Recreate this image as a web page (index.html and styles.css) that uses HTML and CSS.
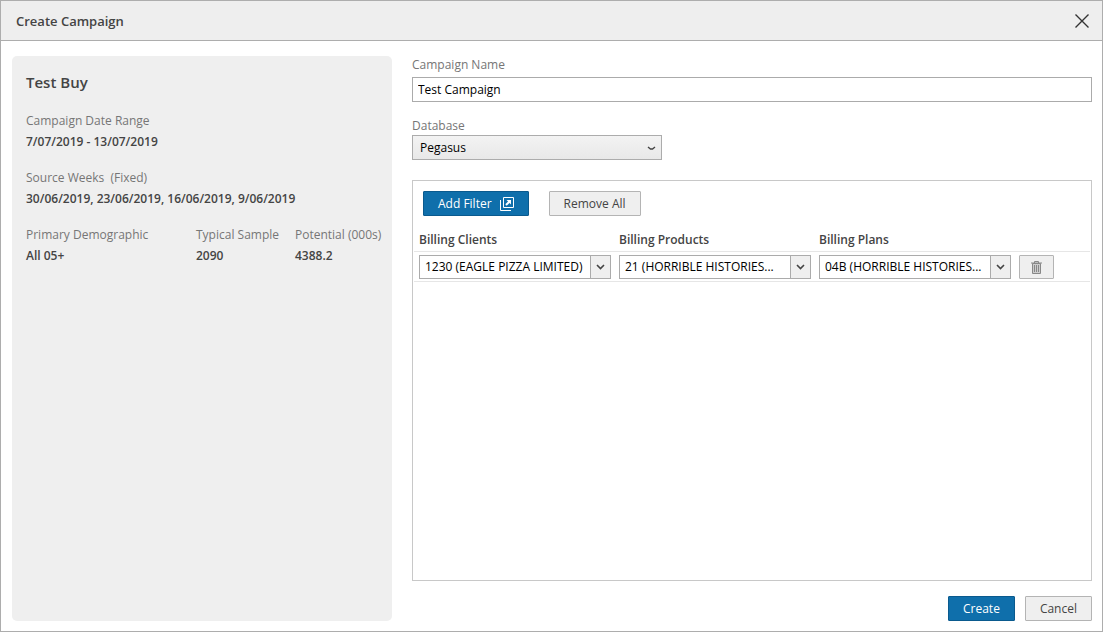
FILE: index.html
```html
<!DOCTYPE html>
<html lang="en">

<head>
    <meta charset="UTF-8">
    <meta name="viewport" content="width=device-width, initial-scale=1.0">
    <title>Create Campaign</title>

    <link rel="stylesheet" href="styles.css">
</head>

<body>
    <div class="dialog">
        <header class="dialog-header">
            <h1>Create Campaign</h1>
            <button type="button" class="close" aria-label="Close">
                <svg width="14" height="14" viewBox="0 0 14 14">
                    <path d="M0.5 0.5L13.5 13.5M13.5 0.5L0.5 13.5" />
                </svg>
            </button>
        </header>

        <div class="dialog-body">
            <!-- buy summary -->
            <aside class="summary">
                <h2>Test Buy</h2>
                <dl>
                    <div class="wide">
                        <dt>Campaign Date Range</dt>
                        <dd>7/07/2019 - 13/07/2019</dd>
                    </div>
                    <div class="wide">
                        <dt>Source Weeks &nbsp;(Fixed)</dt>
                        <dd>30/06/2019, 23/06/2019, 16/06/2019, 9/06/2019</dd>
                    </div>
                    <div>
                        <dt>Primary Demographic</dt>
                        <dd>All 05+</dd>
                    </div>
                    <div>
                        <dt>Typical Sample</dt>
                        <dd>2090</dd>
                    </div>
                    <div>
                        <dt>Potential (000s)</dt>
                        <dd>4388.2</dd>
                    </div>
                </dl>
            </aside>

            <!-- campaign form -->
            <form class="campaign">
                <div class="field">
                    <label for="name">Campaign Name</label>
                    <input type="text" id="name" value="Test Campaign">
                </div>
                <label for="database">Database</label>
                <div class="dropdown">
                    <select id="database">
                        <option>Pegasus</option>
                    </select>
                    <svg width="9" height="5" viewBox="0 0 9 5">
                        <path d="M1 1L3.5 3H5.5L8 1" />
                    </svg>
                </div>

                <section class="filters">
                    <div class="toolbar">
                        <button type="button" class="btn primary">
                            Add Filter
                            <svg width="14" height="14" viewBox="0 0 14 14">
                                <path d="M3.5 0.5H13.5V10.5H3.5ZM0.5 3V13.5H11" />
                                <path d="M6 8L10 4" stroke-width="2" />
                                <path class="solid" d="M6.5 3H11V7.5Z" />
                            </svg>
                        </button>
                        <button type="button" class="btn">Remove All</button>
                    </div>
                    <table>
                        <thead>
                            <tr>
                                <th id="clients">Billing Clients</th>
                                <th id="products">Billing Products</th>
                                <th id="plans">Billing Plans</th>
                                <td></td>
                            </tr>
                        </thead>
                        <tbody>
                            <tr>
                                <td>
                                    <div class="combo">
                                        <select aria-labelledby="clients">
                                            <option>1230 (EAGLE PIZZA LIMITED)</option>
                                        </select>
                                        <span><svg width="9" height="6" viewBox="0 0 9 6"><path d="M1 1L4.5 4.5L8 1" /></svg></span>
                                    </div>
                                </td>
                                <td>
                                    <div class="combo">
                                        <select aria-labelledby="products">
                                            <option>21 (HORRIBLE HISTORIES...</option>
                                        </select>
                                        <span><svg width="9" height="6" viewBox="0 0 9 6"><path d="M1 1L4.5 4.5L8 1" /></svg></span>
                                    </div>
                                </td>
                                <td>
                                    <div class="combo">
                                        <select aria-labelledby="plans">
                                            <option>04B (HORRIBLE HISTORIES...</option>
                                        </select>
                                        <span><svg width="9" height="6" viewBox="0 0 9 6"><path d="M1 1L4.5 4.5L8 1" /></svg></span>
                                    </div>
                                </td>
                                <td>
                                    <button type="button" class="btn delete" aria-label="Delete filter">
                                        <svg width="11" height="13" viewBox="0 0 11 13">
                                            <path class="can" d="M1.5 2.5H9.5V12.5H1.5Z" />
                                            <path d="M0 2H11M3.5 2V0.5H7.5V2M3.5 4V11M5.5 4V11M7.5 4V11" />
                                        </svg>
                                    </button>
                                </td>
                            </tr>
                        </tbody>
                    </table>
                </section>

                <div class="actions">
                    <button type="submit" class="btn primary">Create</button>
                    <button type="button" class="btn">Cancel</button>
                </div>
            </form>
        </div>
    </div>
</body>

</html>
```
FILE: styles.css
```css
* {
    box-sizing: border-box;
}

body {
    margin: 0;
    background: #fff;
    color: #444;
    font: 12px/18px "Segoe UI", "Open Sans", sans-serif;
}

button,
input,
select {
    margin: 0;
    font: inherit;
}

svg {
    fill: none;
    stroke: currentColor;
}

.dialog {
    display: flex;
    flex-direction: column;
    min-height: 100vh;
    border: 1px solid #adadad;
}

.dialog-header {
    display: flex;
    align-items: center;
    justify-content: space-between;
    height: 40px;
    padding: 0 12px 0 15px;
    background: #eee;
    border-bottom: 1px solid #adadad;
}

.dialog-header h1 {
    margin: 0;
    font-size: 13px;
    font-weight: 600;
}

.close {
    display: flex;
    padding: 1px;
    border: 0;
    background: none;
    color: #333;
    cursor: pointer;
}

.close svg {
    stroke-width: 1.4;
}

.dialog-body {
    display: flex;
    flex: 1;
    gap: 20px;
    padding: 15px 10px 10px 11px;
}

/* buy summary */
.summary {
    width: 380px;
    padding: 14px;
    border-radius: 5px;
    background: #efefef;
}

.summary h2 {
    margin: 0 0 16px;
    font-size: 15px;
    line-height: 24px;
    font-weight: 600;
}

.summary dl {
    display: grid;
    grid-template-columns: 170px 99px 1fr;
    row-gap: 15px;
    margin: 0;
    line-height: 21px;
    white-space: nowrap;
}

.summary .wide {
    grid-column: 1 / -1;
}

.summary dt {
    color: #767676;
}

.summary dd {
    margin: 0;
    font-weight: 600;
}

/* campaign form */
.campaign {
    display: flex;
    flex: 1;
    flex-direction: column;
}

.campaign label {
    display: block;
    color: #767676;
}

.field {
    margin-bottom: 15px;
}

.field input {
    display: block;
    width: 100%;
    height: 25px;
    margin-top: 3px;
    padding: 0 5px;
    border: 1px solid #ababab;
    color: #000;
}

.dropdown {
    position: relative;
    width: 250px;
}

.dropdown select {
    display: block;
    width: 100%;
    height: 25px;
    padding: 0 20px 0 7px;
    border: 1px solid #acacac;
    border-radius: 0;
    background: linear-gradient(#f3f3f3, #e8e8e8);
    color: #000;
    appearance: none;
}

.dropdown svg {
    position: absolute;
    top: 11px;
    right: 6px;
    stroke-width: 1.4;
    pointer-events: none;
}

.filters {
    flex: 1;
    margin-top: 20px;
    padding: 10px 1px;
    border: 1px solid #c8c8c8;
}

.toolbar {
    display: flex;
    gap: 20px;
    padding: 0 9px;
}

.btn {
    display: flex;
    align-items: center;
    justify-content: center;
    gap: 8px;
    height: 25px;
    padding: 0 14px;
    border: 1px solid #b4b4b4;
    border-radius: 1px;
    background: #efefef;
    color: #444;
    white-space: nowrap;
    cursor: pointer;
}

.btn.primary {
    border-color: #0a5a8e;
    background: #0f6fab;
    color: #fff;
}

.btn .solid {
    fill: currentColor;
    stroke: none;
}

.filters table {
    width: 100%;
    margin-top: 12px;
    border-collapse: collapse;
    table-layout: fixed;
}

.filters th,
.filters td {
    padding: 3px 3px 2px 5px;
    border-bottom: 1px solid #e6e6e6;
    text-align: left;
}

.filters th {
    width: 200px;
    font-weight: 600;
}

.combo {
    position: relative;
}

.combo select {
    display: block;
    width: 100%;
    height: 24px;
    padding: 0 22px 0 5px;
    border: 1px solid #ababab;
    border-radius: 0;
    background: #fff;
    color: #000;
    appearance: none;
}

/* arrow box over the right end of the select */
.combo span {
    position: absolute;
    top: 1px;
    right: 1px;
    bottom: 1px;
    display: flex;
    align-items: center;
    justify-content: center;
    width: 20px;
    border-left: 1px solid #ababab;
    background: #efefef;
    pointer-events: none;
}

.combo svg {
    stroke-width: 1.6;
}

.delete {
    width: 35px;
    height: 24px;
    padding: 0;
    color: #888;
}

.delete .can {
    fill: #ccc;
}

.actions {
    display: flex;
    justify-content: flex-end;
    gap: 10px;
    margin-top: 15px;
}
```
